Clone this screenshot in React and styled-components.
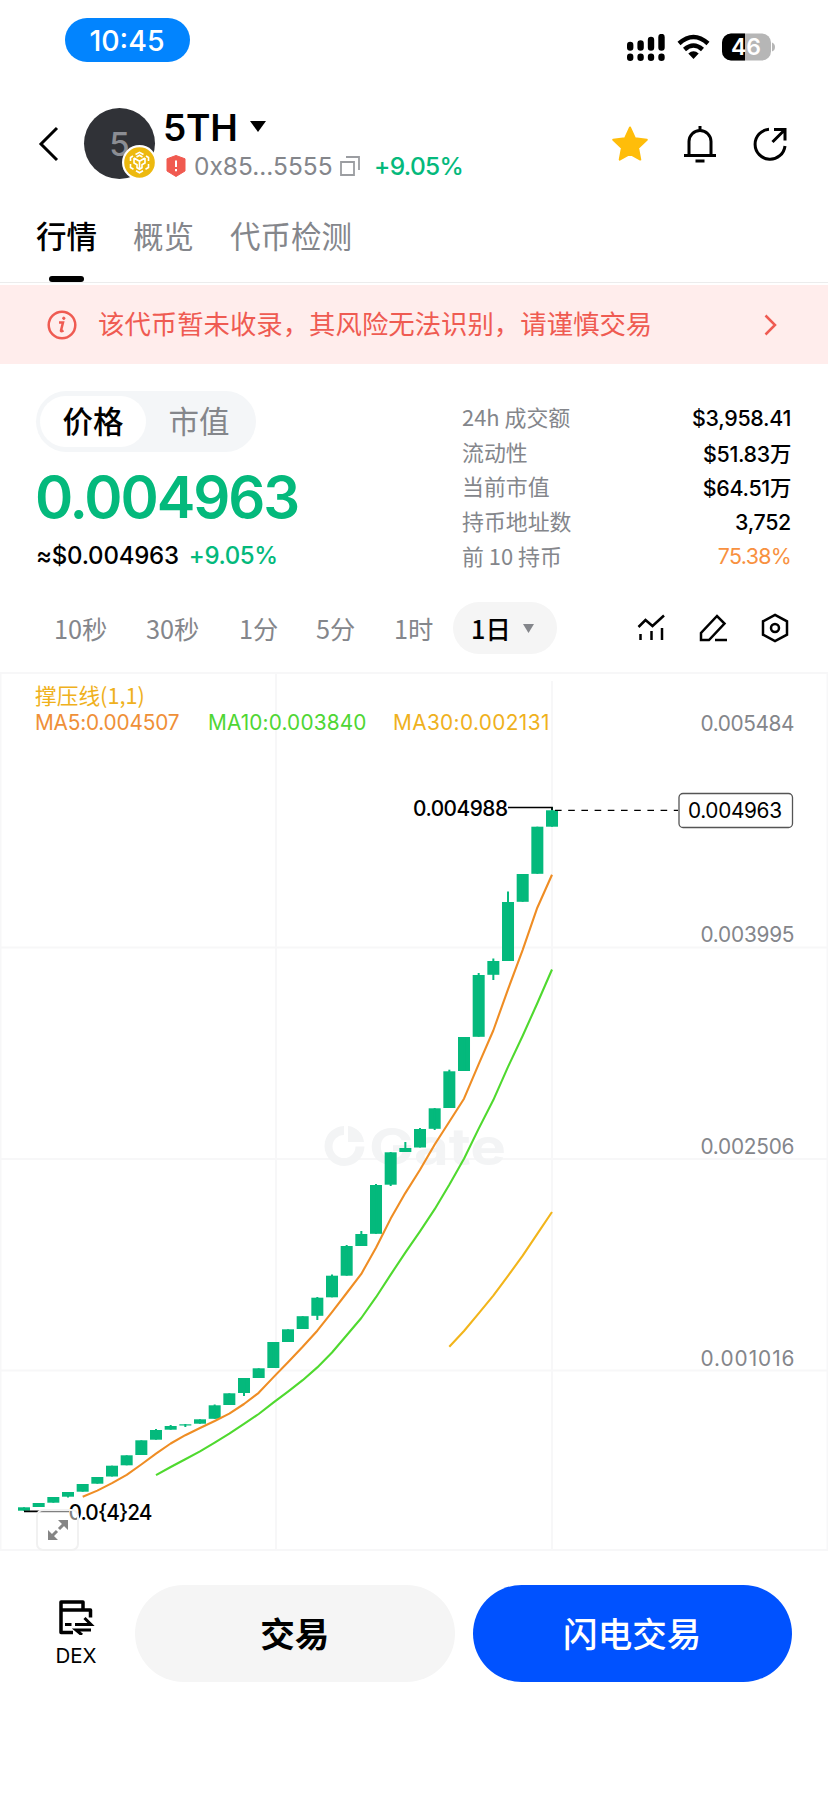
import React from 'react';
import styled, { createGlobalStyle } from 'styled-components';

const LATIN = 'Inter, "Noto Sans CJK SC", sans-serif';
const CJK = '"Noto Sans CJK SC", sans-serif';
const GREEN = '#04b97c';
const GRAY = '#84868b';

const GlobalStyle = createGlobalStyle`
  * { box-sizing: border-box; }
  body { margin: 0; background: #fff; color: #000; font-family: ${LATIN}; }
  button { border: 0; padding: 0; background: none; color: inherit; font: inherit; }
  svg { display: block; flex: none; }
`;

const Screen = styled.div`
  width: 828px;
  height: 1793px;
  display: flex;
  flex-direction: column;
  overflow: hidden;
  white-space: nowrap;
`;

const StatusBar = styled.div`
  height: 90px;
  padding: 18px 53px 0 65px;
  display: flex;
  justify-content: space-between;
  align-items: flex-start;
`;

const TimePill = styled.div`
  width: 125px;
  height: 44px;
  padding-right: 1px;
  border-radius: 22px;
  background: #0284fe;
  color: #fff;
  font-size: 28.5px;
  line-height: 45px;
  font-weight: 500;
  text-align: center;
`;

const StatusIcons = styled.div`
  display: flex;
  align-items: center;
  padding-top: 15px;
  gap: 12px;
`;

const Header = styled.header`
  height: 107px;
  padding: 0 39px 0 36px;
  display: flex;
  align-items: center;
`;

const Avatar = styled.div`
  position: relative;
  width: 71px;
  height: 71px;
  margin-left: 24px;
  border-radius: 50%;
  background: #303237;
  color: #8b8d93;
  font-size: 33px;
  font-weight: 500;
  line-height: 72px;
  text-align: center;
`;

const ChainBadge = styled.svg`
  position: absolute;
  left: 38px;
  top: 37px;
`;

const TokenInfo = styled.div`
  margin-left: 8px;
  padding-top: 3px;
  flex: 1;
`;

const TokenName = styled.div`
  display: flex;
  align-items: center;
  gap: 12px;
  height: 42px;
  font-size: 37px;
  font-weight: 600;
  letter-spacing: -0.2px;
`;

const TokenMeta = styled.div`
  display: flex;
  align-items: center;
  height: 36px;
  padding-left: 3px;
  font-size: 24.5px;
`;

const Address = styled.span`
  width: 146px;
  margin-left: 8px;
  color: ${GRAY};
`;

const Change = styled.span`
  color: ${GREEN};
  font-weight: 500;
  margin-left: ${(p) => p.$gap}px;
  letter-spacing: ${(p) => p.$spacing}px;
`;

const HeaderActions = styled.div`
  display: flex;
  align-items: center;
  gap: 34px;
`;

const Tabs = styled.nav`
  display: flex;
  gap: 36px;
  height: 86px;
  padding: 18px 36px 0;
  border-bottom: 1px solid #ececec;
`;

const Tab = styled.div`
  display: flex;
  flex-direction: column;
  align-items: center;
  font-family: ${CJK};
  font-size: 30.5px;
  line-height: 40px;
  font-weight: ${(p) => (p.$active ? 500 : 400)};
  color: ${(p) => (p.$active ? '#000' : GRAY)};
  &::after {
    content: '';
    display: ${(p) => (p.$active ? 'block' : 'none')};
    width: 35px;
    height: 6px;
    margin-top: 21px;
    border-radius: 3px;
    background: #000;
  }
`;

const Warning = styled.div`
  height: 79px;
  margin-top: 2px;
  padding: 0 51px 0 47px;
  display: flex;
  align-items: center;
  background: #ffedec;
  color: #ef5b52;
  font: 400 26.4px/38px ${CJK};
`;

const WarningText = styled.span`
  flex: 1;
  margin-left: 21px;
  padding-bottom: 4px;
`;

const Summary = styled.section`
  display: flex;
  justify-content: space-between;
  height: 229px;
  padding: 27px 37px 0 36px;
`;

const Toggle = styled.div`
  display: flex;
  width: 220px;
  height: 61px;
  padding: 5px 4px;
  border-radius: 31px;
  background: #f4f6f8;
`;

const ToggleItem = styled.button`
  width: 106px;
  padding-bottom: 3px;
  border-radius: 26px;
  font: ${(p) => (p.$active ? 500 : 400)} 30.5px/48px ${CJK};
  color: ${(p) => (p.$active ? '#000' : GRAY)};
  background: ${(p) => (p.$active ? '#fff' : 'transparent')};
`;

const Price = styled.div`
  margin: 9px 0 0 -1px;
  height: 72px;
  font-size: 58px;
  line-height: 72px;
  font-weight: 600;
  letter-spacing: -2.1px;
  color: ${GREEN};
`;

const FiatPrice = styled.div`
  height: 40px;
  margin-top: 3px;
  font-size: 24px;
  line-height: 40px;
  font-weight: 500;
  letter-spacing: -0.22px;
`;

const Stats = styled.dl`
  width: 330px;
  margin: 9px 0 0;
`;

const StatRow = styled.div`
  display: flex;
  justify-content: space-between;
  align-items: center;
  height: 34.6px;
`;

const StatLabel = styled.dt`
  padding-left: 1px;
  font: 400 21.9px/34px ${CJK};
  color: ${GRAY};
`;

const StatValue = styled.dd`
  margin: 0;
  padding-top: 1px;
  font-size: 21.4px;
  letter-spacing: ${(p) => (p.$warn ? -0.7 : -0.3)}px;
  font-weight: ${(p) => (p.$warn ? 400 : 500)};
  color: ${(p) => (p.$warn ? '#f8913f' : '#000')};
`;

const Toolbar = styled.div`
  display: flex;
  align-items: center;
  height: 79px;
  padding: 0 38px 9px 54px;
  font: 400 25.3px/36px ${CJK};
  color: ${GRAY};
`;

const Interval = styled.button`
  width: ${(p) => p.$width}px;
  text-align: left;
`;

const ActiveInterval = styled.button`
  display: flex;
  align-items: center;
  gap: 12px;
  width: 104px;
  height: 52px;
  padding-left: 18px;
  border-radius: 26px;
  background: #f5f5f5;
  color: #000;
  font-weight: 500;
`;

const ToolIcons = styled.div`
  display: flex;
  align-items: center;
  gap: 31px;
  margin-left: auto;
`;

const ChartPanel = styled.section`
  position: relative;
  height: 879px;
`;

const Legend = styled.div`
  position: absolute;
  left: 35px;
  top: 9px;
  font-size: 20.8px;
  line-height: 27px;
`;

const Indicator = styled.div`
  font: 400 21.7px/28px ${CJK};
  color: #efb11d;
`;

const Averages = styled.div`
  display: flex;
`;

const Average = styled.span`
  width: ${(p) => p.$width}px;
  color: ${(p) => p.$color};
  letter-spacing: ${(p) => p.$spacing}px;
`;

const ExpandButton = styled.button`
  position: absolute;
  left: 36px;
  top: 837px;
  width: 43px;
  height: 42px;
  display: flex;
  align-items: center;
  justify-content: center;
  border: 2px solid #f1f1f1;
  border-radius: 7px;
  background: rgba(255, 255, 255, 0.5);
`;

const BottomBar = styled.footer`
  display: flex;
  align-items: center;
  height: 97px;
  margin-top: 34px;
  padding: 0 36px 0 42px;
`;

const DexLink = styled.div`
  width: 68px;
  margin-right: 25px;
  padding-top: 1px;
  display: flex;
  flex-direction: column;
  align-items: center;
  gap: 7px;
  font-size: 20.5px;
  line-height: 28px;
`;

const TradeButton = styled.button`
  flex: 1;
  height: 97px;
  margin-right: ${(p) => (p.$primary ? 0 : 18)}px;
  padding-bottom: 3px;
  border-radius: 49px;
  background: ${(p) => (p.$primary ? '#0052ff' : '#f5f5f5')};
  color: ${(p) => (p.$primary ? '#fff' : '#000')};
  font: ${(p) => (p.$primary ? 500 : 700)} 34.6px/48px ${CJK};
`;

// Candle bodies and wicks as [close, open, high, low], measured down the screen.
const CHART_TOP = 672;
const CANDLES = [
  [1507.3, 1510.7], [1503, 1507], [1497, 1502.7], [1492, 1496.7, 1492, 1497.5], [1484, 1491.7],
  [1477, 1483.7], [1465.7, 1476.5], [1455.3, 1465.3], [1440.3, 1455], [1430, 1439.7, 1429],
  [1426, 1429.7, 1425], [1424.3, 1425.5, 1424, 1427], [1419.3, 1423.7], [1405.3, 1418.8, 1404.5],
  [1393.3, 1405], [1378, 1393, 1378, 1396], [1368.3, 1378], [1342, 1368], [1329.3, 1342],
  [1316.2, 1329], [1297.7, 1315.8, 1297, 1320], [1275.7, 1297.3, 1274.5], [1246, 1275.7, 1245],
  [1234, 1246, 1231], [1185, 1233.8, 1184], [1152.3, 1184.7, 1152, 1186], [1148, 1152, 1142],
  [1129, 1147.5, 1128], [1108.3, 1128.8, 1108, 1130], [1071.3, 1108, 1069.7], [1037, 1071],
  [975, 1036.8, 973], [961, 974.8, 958.5, 980], [902, 961, 891.5], [874, 901.8],
  [826.7, 873.8], [810.3, 826.7, 807],
].map(([close, open, high = close, low = open], i) => ({
  x: 24 + i * 14.667,
  close: close - CHART_TOP,
  open: open - CHART_TOP,
  high: high - CHART_TOP,
  low: low - CHART_TOP,
}));

const average = (period) =>
  CANDLES.slice(period - 1)
    .map((c, i) => {
      const sum = CANDLES.slice(i, i + period).reduce((t, d) => t + d.close, 0);
      return `${c.x.toFixed(1)},${(sum / period).toFixed(1)}`;
    })
    .join(' ');

const AXIS = [
  ['0.005484', 59], ['0.003995', 270], ['0.002506', 481.5], ['0.001016', 693.5],
];

function Chart() {
  return (
    <svg width="828" height="879" fontFamily="Inter, sans-serif" fontSize="20.8">
      <g stroke="#f7f7f8" strokeWidth="2" fill="none">
        <rect x="0.5" y="1" width="827" height="877" />
        <path d="M276 1V877M552 9V877M0 275.5H828M0 487H828M0 698.5H828" />
      </g>
      <g fill="#f3f4f5">
        <path d="M344 454a20 20 0 1 0 20.500 20.500h-9a11.500 11.500 0 1 1 -11.500 -11.500zM348 454v16h16a18 18 0 0 0 -16 -16z" />
        <text x="369" y="493" fontSize="51" fontWeight="700" textLength="137" lengthAdjust="spacingAndGlyphs">Gate</text>
      </g>
      <g fill={GREEN}>
        {CANDLES.map((c) => (
          <React.Fragment key={c.x}>
            <rect x={c.x - 6} y={c.close} width="12" height={c.open - c.close} />
            <rect x={c.x - 1} y={c.high} width="2" height={c.low - c.high} />
          </React.Fragment>
        ))}
      </g>
      <g fill="none" strokeWidth="2.1" strokeLinejoin="round">
        <polyline points={average(5)} stroke="#ef8d24" />
        <polyline points={average(10)} stroke="#4fd92f" />
        <polyline points={average(30)} stroke="#f2b51b" />
      </g>
      <path d="M508 135.500H552V138M24 839.300H69" stroke="#000" strokeWidth="1.700" fill="none" />
      <path d="M555 138.400H678" stroke="#000" strokeWidth="1.300" strokeDasharray="6.600 6.600" />
      <rect x="679" y="121.500" width="113.500" height="34" rx="4" fill="#fff" stroke="#555" strokeWidth="1.300" />
      <g fontWeight="500">
        <text x="413" y="143.500" textLength="95">0.004988</text>
        <text x="688" y="146" textLength="94" fontWeight="400">0.004963</text>
        <text x="68.500" y="847.700" textLength="84">0.0{'{4}'}24</text>
      </g>
      <g fill={GRAY}>
        {AXIS.map(([label, y]) => (
          <text key={label} x="700.500" y={y} textLength="94">{label}</text>
        ))}
      </g>
    </svg>
  );
}

const SignalIcon = () => (
  <svg width="38" height="27" viewBox="0 0 38 27">
    <path d="M3.200 11v2.500M13.600 9.500v4M24 6v7.500M34.500 3v10.500M3.200 22.800v1M13.600 22.800v1M24 22.800v1M34.500 22.800v1" stroke="#000" strokeWidth="6.400" strokeLinecap="round" />
  </svg>
);

const WifiIcon = () => (
  <svg width="33" height="26" viewBox="0 0 33 26">
    <g fill="none" stroke="#000" strokeWidth="4.500">
      <path d="M2 9.500Q16.500 -3.500 31 9.500" />
      <path d="M7.500 15.500Q16.500 7.500 25.500 15.500" />
    </g>
    <path d="M11.300 19.500q5.200-4.500 10.400 0l-5.200 5.500z" />
  </svg>
);

const BatteryIcon = () => (
  <svg width="53" height="28" viewBox="0 0 53 28" fontFamily="Inter, sans-serif">
    <rect x="0" y="0.500" width="49" height="27" rx="9" fill="#b6b6b6" />
    <path d="M23 0.500H9a9 9 0 0 0-9 9v9a9 9 0 0 0 9 9h14z" />
    <path d="M50 9.500q3 1 3 4.500t-3 4.500z" fill="#b6b6b6" />
    <text x="24" y="22" fontSize="23" fontWeight="600" fill="#fff" textAnchor="middle">46</text>
  </svg>
);

const Stroke = ({ w, h, d, s = 3, color = '#000', children }) => (
  <svg width={w} height={h} viewBox={`0 0 ${w} ${h}`} fill="none" stroke={color} strokeWidth={s}>
    <path d={d} />
    {children}
  </svg>
);

const STATS = [
  ['24h 成交额', '$3,958.41'],
  ['流动性', '$51.83万'],
  ['当前市值', '$64.51万'],
  ['持币地址数', '3,752'],
  ['前 10 持币', '75.38%', true],
];

const INTERVALS = [['10秒', 92], ['30秒', 93], ['1分', 77], ['5分', 78], ['1时', 59]];

export default function App() {
  return (
    <Screen lang="zh-CN">
      <GlobalStyle />
      <StatusBar>
        <TimePill>10:45</TimePill>
        <StatusIcons>
          <SignalIcon />
          <WifiIcon />
          <BatteryIcon />
        </StatusIcons>
      </StatusBar>

      <Header>
        <Stroke w={24} h={40} d="M21 4L5 20L21 36" />
        <Avatar>
          5
          <ChainBadge width="35" height="35" viewBox="0 0 35 35">
            <circle cx="17.500" cy="17.500" r="17.500" fill="#fff" />
            <circle cx="17.500" cy="17.500" r="15.300" fill="#edb90f" />
            <g fill="none" stroke="#fff" strokeWidth="1.600">
              <path d="M13.500 9.500l4-2.200 4 2.200M11 11l-2.500 1.500v3.500M24 11l2.500 1.500v3.500M8.500 19v3.500l3 1.800M26.500 19v3.500l-3 1.800M14 25.800l3.500 2 3.500-2" />
              <path d="M12 13l5.500 3.200 5.500-3.200M17.500 16v8M12 13v5l3 1.800v3l2.500 1.500 2.500-1.500v-3l3-1.800v-5M14.500 12l3-1.800 3 1.800" />
            </g>
          </ChainBadge>
        </Avatar>
        <TokenInfo>
          <TokenName>
            5TH
            <svg width="16" height="12"><path d="M0 0h16l-8 11z" /></svg>
          </TokenName>
          <TokenMeta>
            <svg width="20" height="22" viewBox="0 0 20 22">
              <path d="M10 0.500l9 3.300v12.200l-9 5.500l-9-5.500v-12.200z" fill="#f05a50" stroke="#f05a50" strokeLinejoin="round" />
              <path d="M10 5.500v6.500M10 14v2.300" stroke="#fff" strokeWidth="2" />
            </svg>
            <Address>0x85...5555</Address>
            <Stroke w={20} h={20} s={1.800} color="#9b9da1" d="M1 6h13v13h-13zM6 1h13v13" />
            <Change $gap={14} $spacing={-0.65}>+9.05%</Change>
          </TokenMeta>
        </TokenInfo>
        <HeaderActions>
          <svg width="38" height="38" viewBox="0 0 38 38">
            <path d="M19 2.500l5 10.800 11.800 1.500-8.700 8.100 2.200 11.700-10.300-5.700-10.300 5.700 2.200-11.700-8.700-8.100 11.800-1.500z" fill="#ffbd0a" stroke="#ffbd0a" strokeWidth="2" strokeLinejoin="round" />
          </svg>
          <Stroke w={34} h={38} d="M1 30.500h32M6 31V16.500a11 11 0 0 1 22 0V31M17 1v5M12.500 36h9" />
          <Stroke w={38} h={38} d="M18 4.300A15 15 0 1 0 34 21M23 4.500h11v11M34 4.500L21.500 17" />
        </HeaderActions>
      </Header>

      <Tabs>
        <Tab $active>行情</Tab>
        <Tab>概览</Tab>
        <Tab>代币检测</Tab>
      </Tabs>

      <Warning>
        <svg width="30" height="30" viewBox="0 0 30 30" fill="none" stroke="#ef5b52">
          <circle cx="15" cy="15" r="13.300" strokeWidth="2.500" />
          <path d="M12 12.500h4l-2 8q-.3 1.500 2.500 0" strokeWidth="2.500" />
          <circle cx="16.800" cy="8.300" r="1.200" fill="#ef5b52" />
        </svg>
        <WarningText>该代币暂未收录，其风险无法识别，请谨慎交易</WarningText>
        <Stroke w={13} h={22} s={2.500} color="#ef5b52" d="M1.500 1.500L11 11L1.500 20.500" />
      </Warning>

      <Summary>
        <div>
          <Toggle>
            <ToggleItem $active>价格</ToggleItem>
            <ToggleItem>市值</ToggleItem>
          </Toggle>
          <Price>0.004963</Price>
          <FiatPrice>
            ≈$0.004963
            <Change $gap={10} $spacing={-0.4}>+9.05%</Change>
          </FiatPrice>
        </div>
        <Stats>
          {STATS.map(([label, value, warn]) => (
            <StatRow key={label}>
              <StatLabel>{label}</StatLabel>
              <StatValue $warn={warn}>{value}</StatValue>
            </StatRow>
          ))}
        </Stats>
      </Summary>

      <Toolbar>
        {INTERVALS.map(([label, width]) => (
          <Interval key={label} $width={width}>{label}</Interval>
        ))}
        <ActiveInterval>
          1日
          <svg width="11" height="9"><path d="M0 0h11l-5.500 9z" fill={GRAY} /></svg>
        </ActiveInterval>
        <ToolIcons>
          <Stroke w={30} h={30} s={2.500} d="M2.500 14l7-7 7 6L28 2.500M4.500 27v-6M15.500 27v-9M26 27V15" />
          <Stroke w={32} h={30} s={2.500} d="M4 27v-7L20 3l7.500 7.500L12 27zM18 27h12" />
          <Stroke w={30} h={30} s={2.500} d="M15 1.800l12 6.500v13.400l-12 6.500-12-6.500V8.300z">
            <circle cx="15" cy="15" r="4" />
          </Stroke>
        </ToolIcons>
      </Toolbar>

      <ChartPanel>
        <Chart />
        <Legend>
          <Indicator>撑压线(1,1)</Indicator>
          <Averages>
            <Average $color="#ef9038" $width={173} $spacing={-0.2}>MA5:0.004507</Average>
            <Average $color="#4fd634" $width={185} $spacing={0.15}>MA10:0.003840</Average>
            <Average $color="#efb11d" $width={160} $spacing={0.38}>MA30:0.002131</Average>
          </Averages>
        </Legend>
        <ExpandButton aria-label="展开">
          <svg width="22" height="22" viewBox="0 0 22 22" fill="#858585">
            <path d="M11 1h10v10zM1 11v10h10z" />
            <path d="M18 4l-6 6M4 18l6-6" stroke="#858585" strokeWidth="3" />
          </svg>
        </ExpandButton>
      </ChartPanel>

      <BottomBar>
        <DexLink>
          <svg width="38" height="36" viewBox="0 0 38 36" fill="none" stroke="#000" strokeWidth="3.500">
            <path d="M16 33.500H4V3h22v8M4 11h29.500v7.500" strokeLinejoin="round" />
            <path d="M8 25.500h6.500M18 25.500h16L27.500 19M34 31H19l6 5" strokeWidth="3" />
          </svg>
          DEX
        </DexLink>
        <TradeButton>交易</TradeButton>
        <TradeButton $primary>闪电交易</TradeButton>
      </BottomBar>
    </Screen>
  );
}
